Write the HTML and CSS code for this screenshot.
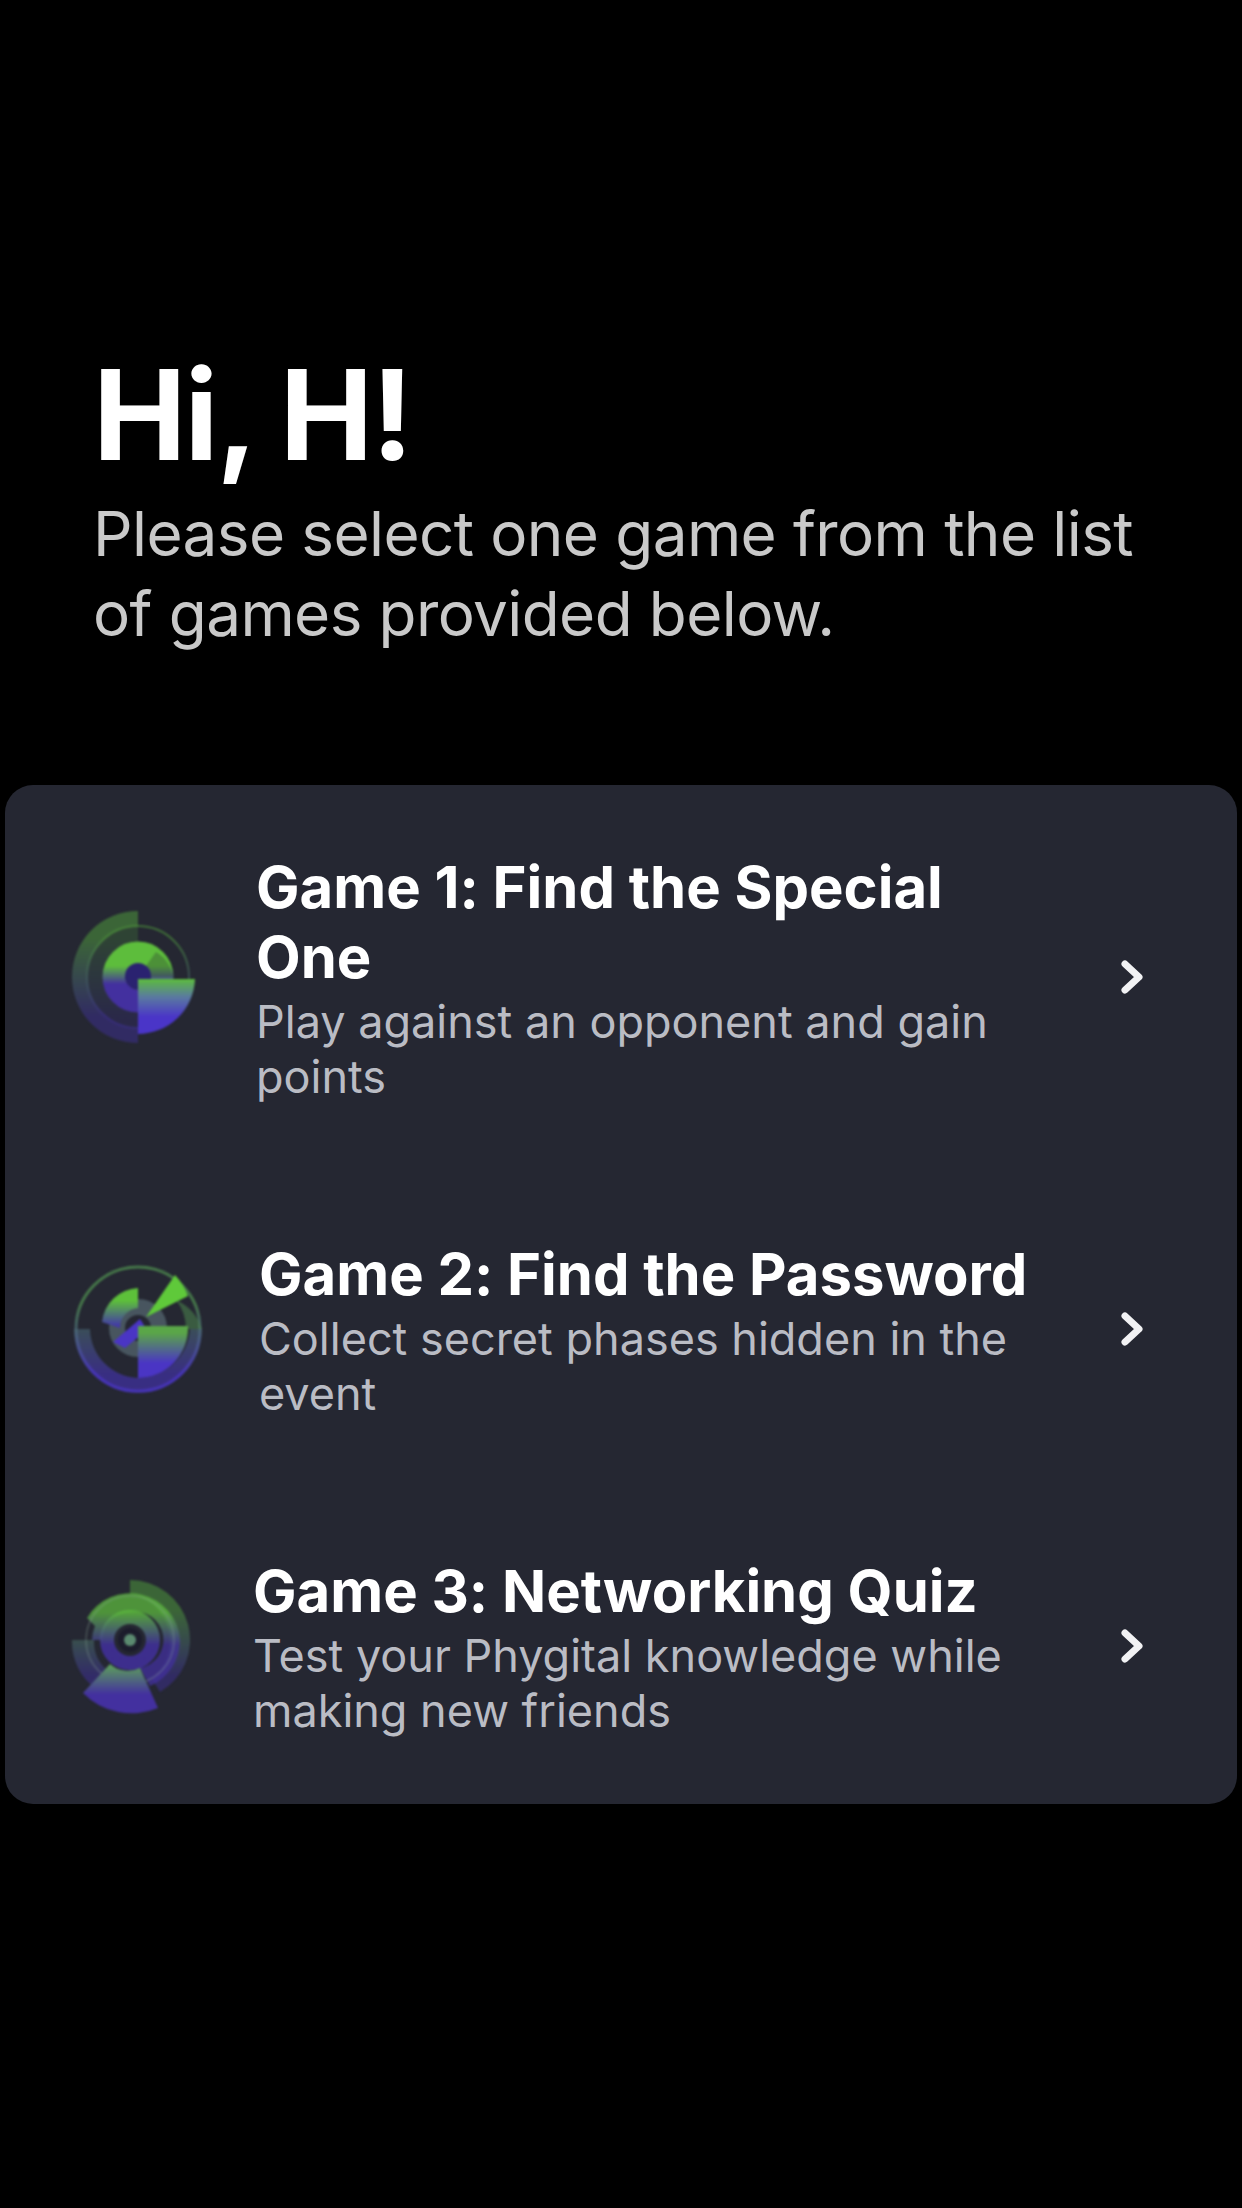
FILE: index.html
```html
<!DOCTYPE html>
<html lang="en">
<head>
<meta charset="utf-8">
<title>Games</title>
<link rel="stylesheet" href="styles.css">
</head>
<body>
<div class="intro">
  <h1 class="hello">Hi, H!</h1>
  <p class="lead">Please select one game from the list of games provided below.</p>
</div>
<div class="card">
  <a class="game game1" href="#">
    <svg class="game-icon" viewBox="0 13 170 170">
      <defs>
        <linearGradient id="g1a" gradientUnits="userSpaceOnUse" x1="0" y1="60" x2="0" y2="120"><stop offset="0.45" stop-color="#5dbd3c"/><stop offset="0.75" stop-color="#43309f"/></linearGradient>
        <linearGradient id="g1b" gradientUnits="userSpaceOnUse" x1="0" y1="98" x2="0" y2="148"><stop offset="0.05" stop-color="#5cba40"/><stop offset="0.4" stop-color="#5a7aa0"/><stop offset="0.8" stop-color="#4a35c8"/></linearGradient>
        <linearGradient id="g1c" gradientUnits="userSpaceOnUse" x1="0" y1="32" x2="0" y2="164"><stop offset="0.2" stop-color="#4f9a3c"/><stop offset="0.8" stop-color="#3c2f8c"/></linearGradient>
      </defs>
      <path d="M88 32A66 66 0 0 0 88 164V149A51 51 0 0 1 88 47Z" fill="url(#g1c)" opacity=".55"/>
      <path d="M88 47A51 51 0 0 0 88 149V133A35 35 0 0 1 88 63Z" fill="url(#g1c)" opacity=".25"/>
      <circle cx="88" cy="98" r="51" fill="none" stroke="url(#g1c)" stroke-width="2" opacity=".6"/>
      <circle cx="88" cy="98" r="24" fill="none" stroke="url(#g1a)" stroke-width="23"/>
      <path d="M88 98L106 73A35 35 0 0 1 123 98Z" fill="#252732" opacity=".3"/>
      <circle cx="88" cy="97" r="13" fill="#2a2270"/>
      <path d="M88 100H145A57 57 0 0 1 88 155Z" fill="url(#g1b)"/>
    </svg>
    <div class="game-text">
      <div class="game-title">Game 1: Find the Special One</div>
      <div class="game-desc">Play against an opponent and gain points</div>
    </div>
    <svg class="chev" viewBox="0 0 24 36"><path d="M4 5L18 18L4 31"/></svg>
  </a>
  <a class="game game2" href="#">
    <svg class="game-icon" viewBox="0 4 170 170">
      <defs>
        <linearGradient id="g2a" gradientUnits="userSpaceOnUse" x1="0" y1="88" x2="0" y2="138"><stop offset="0.1" stop-color="#5aa648"/><stop offset="0.7" stop-color="#4a35c4"/></linearGradient>
        <linearGradient id="g2b" gradientUnits="userSpaceOnUse" x1="0" y1="48" x2="0" y2="90"><stop offset="0.3" stop-color="#5dc03a"/><stop offset="0.9" stop-color="#4338a8"/></linearGradient>
        <linearGradient id="g2c" gradientUnits="userSpaceOnUse" x1="0" y1="25" x2="0" y2="153"><stop offset="0.3" stop-color="#4f8f50"/><stop offset="0.85" stop-color="#4a35c4"/></linearGradient>
      </defs>
      <circle cx="88" cy="89" r="62" fill="none" stroke="url(#g2c)" stroke-width="3" opacity=".75"/>
      <path d="M24 89A64 64 0 0 0 152 89H140A52 52 0 0 1 88 138A50 50 0 0 1 40 89Z" fill="url(#g2c)" opacity=".55"/>
      <path d="M126 60A48 48 0 0 1 152 89H136A48 48 0 0 0 126 60Z" fill="#4f8f50" opacity=".5"/>
      <circle cx="88" cy="88" r="21" fill="none" stroke="#5b6f78" stroke-width="16" opacity=".65"/>
      <path d="M88 48A38 38 0 0 0 52 82L70 88A20 20 0 0 1 88 68Z" fill="url(#g2b)"/>
      <path d="M96 77L125 35A60 60 0 0 1 138 56Z" fill="#5fc93a"/>
      <path d="M63 102L90 79L97 90L75 108Z" fill="#4a35c4"/>
      <path d="M88 86H138A50 50 0 0 1 88 138Z" fill="url(#g2a)"/>
    </svg>
    <div class="game-text">
      <div class="game-title">Game 2: Find the Password</div>
      <div class="game-desc">Collect secret phases hidden in the event</div>
    </div>
    <svg class="chev" viewBox="0 0 24 36"><path d="M4 5L18 18L4 31"/></svg>
  </a>
  <a class="game game3" href="#">
    <svg class="game-icon" viewBox="0 0 170 170">
      <defs>
        <linearGradient id="g3a" gradientUnits="userSpaceOnUse" x1="0" y1="28" x2="0" y2="108"><stop offset="0.3" stop-color="#5cb83e"/><stop offset="0.7" stop-color="#42309e"/></linearGradient>
        <linearGradient id="g3b" gradientUnits="userSpaceOnUse" x1="0" y1="103" x2="0" y2="150"><stop offset="0.05" stop-color="#5b9a5e"/><stop offset="0.65" stop-color="#43309f"/></linearGradient>
        <linearGradient id="g3c" gradientUnits="userSpaceOnUse" x1="0" y1="19" x2="0" y2="139"><stop offset="0.25" stop-color="#4f9a3c"/><stop offset="0.8" stop-color="#3c2f8c"/></linearGradient>
      </defs>
      <path d="M80 19A60 60 0 0 1 110 131L102 118A48 48 0 0 0 80 33Z" fill="url(#g3c)" opacity=".55"/>
      <path d="M22 79H44A38 38 0 0 0 58 110L46 128A58 58 0 0 1 22 79Z" fill="url(#g3c)" opacity=".6"/>
      <path d="M37 57A50 50 0 0 1 130 79A50 50 0 0 1 100 125L90 107A28 28 0 0 0 80 51A28 28 0 0 0 52 79H42A40 40 0 0 1 45 65Z" fill="url(#g3a)" opacity=".75"/>
      <circle cx="80" cy="79" r="44" fill="none" stroke="#8fa89a" stroke-width="1.5" opacity=".3"/>
      <circle cx="80" cy="79" r="23" fill="none" stroke="url(#g3a)" stroke-width="14" opacity=".85"/>
      <circle cx="80" cy="79" r="12" fill="#1c1c2c"/>
      <circle cx="80" cy="79" r="6" fill="#5b8a70"/>
      <path d="M60 103A27 27 0 0 0 90 107L108 147A68 68 0 0 1 33 132Z" fill="url(#g3b)"/>
    </svg>
    <div class="game-text">
      <div class="game-title">Game 3: Networking Quiz</div>
      <div class="game-desc">Test your Phygital knowledge while making new friends</div>
    </div>
    <svg class="chev" viewBox="0 0 24 36"><path d="M4 5L18 18L4 31"/></svg>
  </a>
</div>
</body>
</html>
```

FILE: styles.css
```css
html, body {
  margin: 0;
  padding: 0;
}
body {
  height: 2208px;
  background: #000;
  color: #fff;
  font-family: Inter, "Liberation Sans", sans-serif;
  font-feature-settings: "calt" 0;
  overflow: hidden;
}
.intro {
  padding: 340px 60px 0 93px;
  height: 785px;
  box-sizing: border-box;
}
.hello {
  margin: 0 0 4px;
  font-size: 125px;
  line-height: 150px;
  font-weight: 700;
  letter-spacing: -2px;
}
.lead {
  margin: 0;
  font-size: 62px;
  line-height: 80px;
  letter-spacing: -.6px;
  color: #c9c9c9;
}
.card {
  margin: 0 5px;
  padding: 67px 92px 68px 45px;
  background: #252732;
  border-radius: 28px;
  display: flex;
  flex-direction: column;
  gap: 137px;
}
.game {
  display: flex;
  align-items: center;
  color: inherit;
  text-decoration: none;
}
.game-icon {
  width: 170px;
  height: 170px;
  flex: none;
  filter: blur(.8px);
}
.game1 .game-icon { margin-right: 36px; }
.game2 .game-icon { margin-right: 39px; }
.game3 .game-icon { margin-right: 33px; }
.game-text {
  width: 790px;
}
.game-title {
  font-size: 58px;
  line-height: 70px;
  font-weight: 700;
}
.game-desc {
  font-size: 45px;
  line-height: 55px;
  color: #babcc4;
  padding-top: 2px;
  margin-bottom: -2px;
}
.chev {
  width: 24px;
  height: 36px;
  flex: none;
  margin-left: auto;
}
.chev path {
  fill: none;
  stroke: #f2f2f4;
  stroke-width: 7;
  stroke-linecap: round;
  stroke-linejoin: round;
}
```
